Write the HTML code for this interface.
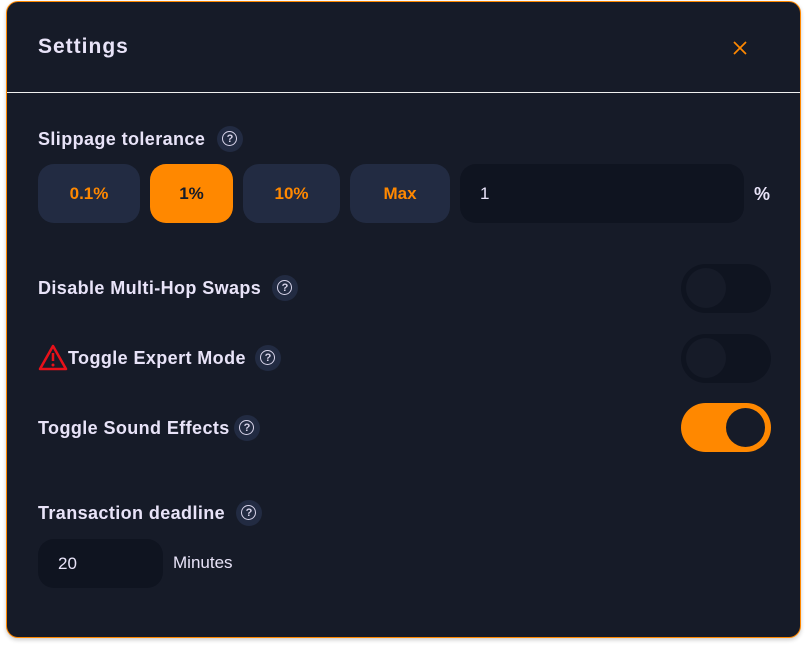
<!DOCTYPE html>
<html><head><style>
body{margin:0;background:#fff;width:808px;height:645px;overflow:hidden;font-family:"Liberation Sans",sans-serif;}
.p{position:absolute;left:6px;top:1px;width:793px;height:635px;background:#161b28;border:1px solid #ff8800;border-radius:12px;overflow:hidden;box-shadow:0 2px 4px rgba(0,0,0,.2)}
.a{position:absolute}
.t{color:#e8e3f8;font-weight:bold;font-size:18px;letter-spacing:0.4px}
.q{position:absolute;width:26px;height:26px;border-radius:50%;background:#222b42}
.q:after{content:"";position:absolute;left:5px;top:5px;width:13px;height:13px;border:1.5px solid #d8d4ea;border-radius:50%}
.q b{position:absolute;left:0;width:26px;top:0;line-height:26px;text-align:center;color:#d8d4ea;font-size:11px;font-weight:bold;z-index:1}
.btn{position:absolute;top:162px;height:59px;background:#222b42;border-radius:16px;color:#ff8800;font-weight:bold;font-size:17px;text-align:center;line-height:59px}
.tg{position:absolute;left:674px;width:90px;height:49px;border-radius:25px;background:#0f1420}
.tg i{position:absolute;left:5px;top:4px;width:40px;height:40px;border-radius:50%;background:#161b28}
</style></head><body>
<div class="p">
<div class="a t" style="left:31px;top:33px;font-size:21px;letter-spacing:1px">Settings</div>
<div class="a" style="left:726px;top:39px;width:14px;height:14px">
<svg width="14" height="14"><path d="M1 1L13 13M13 1L1 13" stroke="#ff8800" stroke-width="1.7"/></svg></div>
<div class="a" style="left:0;top:90px;width:793px;height:1px;background:#f0f0f0"></div>
<div class="a t" style="left:31px;top:127px">Slippage tolerance</div>
<div class="q" style="left:210px;top:124px"><b>?</b></div>
<div class="btn" style="left:31px;width:102px">0.1%</div>
<div class="btn" style="left:143px;width:83px;background:#ff8800;color:#161b28">1%</div>
<div class="btn" style="left:236px;width:97px">10%</div>
<div class="btn" style="left:343px;width:100px">Max</div>
<div class="a" style="left:453px;top:162px;width:284px;height:59px;background:#0f1420;border-radius:16px;color:#e8e3f8;font-size:17px;line-height:59px;text-indent:20px">1</div>
<div class="a t" style="left:747px;top:182px">%</div>
<div class="a t" style="left:31px;top:276px">Disable Multi-Hop Swaps</div>
<div class="q" style="left:265px;top:273px"><b>?</b></div>
<div class="tg" style="top:262px"><i></i></div>
<div class="a" style="left:31px;top:342px"><svg width="30" height="27"><path d="M15 2L28 25H2Z" fill="none" stroke="#e8111a" stroke-width="2.5" stroke-linejoin="round"/><path d="M15 9V17" stroke="#e8111a" stroke-width="2.5"/><circle cx="15" cy="21" r="1.5" fill="#e8111a"/></svg></div>
<div class="a t" style="left:61px;top:346px">Toggle Expert Mode</div>
<div class="q" style="left:248px;top:343px"><b>?</b></div>
<div class="tg" style="top:332px"><i></i></div>
<div class="a t" style="left:31px;top:416px">Toggle Sound Effects</div>
<div class="q" style="left:227px;top:413px"><b>?</b></div>
<div class="tg" style="top:401px;background:#ff8800"><i style="left:45px;top:5px;width:39px;height:39px"></i></div>
<div class="a t" style="left:31px;top:501px">Transaction deadline</div>
<div class="q" style="left:229px;top:498px"><b>?</b></div>
<div class="a" style="left:31px;top:537px;width:125px;height:49px;background:#0f1420;border-radius:16px;color:#e8e3f8;font-size:17px;line-height:49px;text-indent:20px">20</div>
<div class="a" style="left:166px;top:551px;color:#e8e3f8;font-size:17px">Minutes</div>
</div>
</body></html>
